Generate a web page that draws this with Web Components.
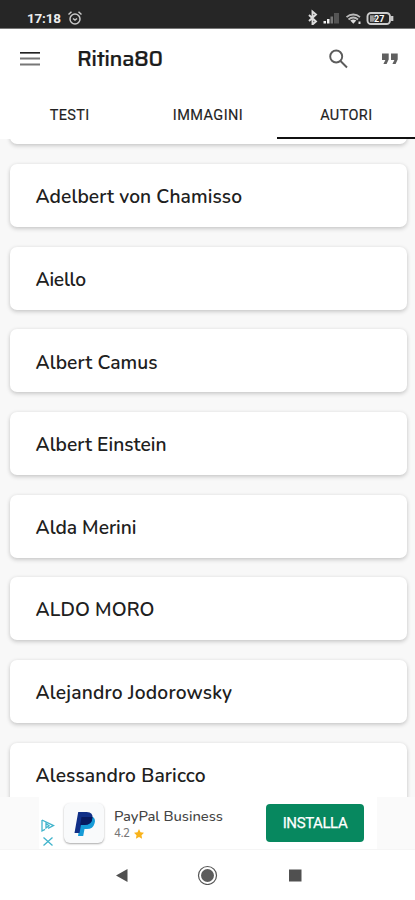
<!DOCTYPE html>
<html lang="it">
<head>
<meta charset="utf-8">
<meta name="viewport" content="width=device-width">
<title>Ritina80</title>
<style>
html,body{margin:0;height:100%;overflow:hidden;background:#fff}
body{font-family:Lato,"Open Sans",sans-serif;color:#161616}
</style>
</head>
<body>
<quotes-app></quotes-app>
<script>
const define = (name, html, ready) => customElements.define(name, class extends HTMLElement {
  constructor() {
    super();
    const t = document.createElement('template');
    t.innerHTML = html;
    this.attachShadow({mode: 'open'}).append(t.content.cloneNode(true));
  }
  connectedCallback() { if (ready) ready(this); }
});

// Text whose tracking is adjusted so that it occupies the given width.
define('fit-text', `<style>:host{display:inline-block;white-space:nowrap}span{display:inline-block}</style><span><slot></slot></span>`, el => {
  const s = el.shadowRoot.querySelector('span');
  const n = el.textContent.length;
  const w = s.getBoundingClientRect().width;
  s.style.letterSpacing = ((+el.getAttribute('width') - w) / (n - 1)) + 'px';
});

define('status-bar', `<style>
:host{display:flex;background:#262626;border-bottom:1px solid #777;box-sizing:border-box;height:29px;padding:9px 20px 0 27px;align-items:flex-start;color:#eee;font:700 13.500px/19px Roboto,sans-serif}
.sp{flex:1}svg{display:block;flex:none}
</style>
<fit-text width="34">17:18</fit-text>
<svg width="16" height="16" viewBox="0 0 16 16" fill="none" stroke="#c8c8c8" stroke-width="1.500" style="margin:1px 0 0 6px"><circle cx="8" cy="9" r="5"/><path d="M1.500 4.500 4.500 1.800M14.500 4.500l-3-2.700M6 8.500l2 1.600 2-1.600"/></svg>
<span class="sp"></span>
<svg width="87" height="16" viewBox="308 9 87 16" fill="none" stroke="#ddd" stroke-width="1.300">
<path d="m309 15 7 6.500-3.500 3V11.500l3.500 3-7 6.500" stroke-width="1.900"/>
<g stroke="none"><path fill="#eee" d="M323.500 21h2.500v2.500h-2.500zM327 19h2.500v4.500h-2.500z"/><path fill="#777" d="M330.500 16.500h2.500v7h-2.500z"/><path fill="#555" d="M334 13h5v10.500h-5z"/></g>
<path d="M346.500 17.200c4-3.600 9.500-3.600 13.500 0M348.500 19.500c3-2.500 6.500-2.500 9.500 0" stroke="#bbb" stroke-width="1.800"/><path d="m350.300 20.600 3 3.200 3-3.200q-3-2-6 0z" fill="#ddd" stroke="none"/><path d="M359.500 21.500v2.500" stroke-width="2"/>
<rect x="367.500" y="13" width="22.500" height="11" rx="3.500" stroke="#ccc" stroke-width="1.900"/><rect x="370" y="15.300" width="6" height="6.500" fill="#999" stroke="none"/><path d="M392.200 16v5" stroke="#ccc" stroke-width="2.300"/>
<text x="374" y="21.800" font-family="Roboto,sans-serif" font-size="9" font-weight="700" fill="#fff" stroke="#262626" stroke-width="1.200" paint-order="stroke">27</text>
</svg>`);

define('app-header', `<style>
:host{display:flex;height:61px;box-sizing:border-box;padding:0 15px 0 20px;align-items:center;background:#fff}
svg{display:block;flex:none}.title{margin:-1px 0 0 37px;flex:1;font:500 21.800px/28px Saira,"Exo 2",Rajdhani,Inter,sans-serif;color:#1c1c1c;-webkit-text-stroke:.2px #1c1c1c}
</style>
<svg width="20" height="15" viewBox="0 0 20 15"><path d="M0 .7h20" stroke="#222" stroke-width="1.900"/><path d="M0 6.500h20M0 12.500h20" stroke="#777" stroke-width="1.900"/></svg>
<span class="title"><fit-text width="86">Ritina80</fit-text></span>
<svg width="20" height="20" viewBox="0 0 20 20" fill="none" stroke="#5c5c5c" stroke-width="1.900" style="margin-top:-2px"><circle cx="8.200" cy="7.500" r="6"/><path d="m12.500 12 6.500 6.500"/></svg>
<svg width="16" height="12" viewBox="0 0 16 12" fill="#606060" style="margin:-1px 2.500px 0 33.500px"><path d="M0 .5h6.700v6L4.600 11H1.400l2-4H0zM9 .5h6.700v6L13.600 11h-3.200l2-4H9z"/></svg>`);

define('tab-bar', `<style>
:host{display:grid;grid-template-columns:1fr 1fr 1fr;height:49px;background:#fff}
div{display:flex;align-items:center;justify-content:center;box-sizing:border-box;padding:4px 0 0 1px;border-bottom:2px solid transparent;font:400 14.500px/20px Roboto,sans-serif;color:#222;-webkit-text-stroke:.15px #222}
.on{border-color:#111}
</style><div><fit-text width="39.500">TESTI</fit-text></div><div><fit-text width="70">IMMAGINI</fit-text></div><div class="on"><fit-text width="52">AUTORI</fit-text></div>`);

define('author-card', `<style>
:host{display:flex;align-items:center;flex:none;height:63px;box-sizing:border-box;padding:3.500px 26px 0;border-radius:7px;background:#fff;box-shadow:0 2px 4px rgba(0,0,0,.17),0 0 4px rgba(0,0,0,.06);font:600 19.200px/26px Nunito,Lato,sans-serif;color:#202020}
</style><slot></slot>`);

define('author-list', `<style>
:host{display:flex;flex-direction:column;justify-content:flex-end;gap:19.650px;height:658px;box-sizing:border-box;padding:0 8.500px 0 9.500px;background:#f8f8f8;overflow:hidden}
author-card:last-child{margin-bottom:-8.500px}
</style>
<author-card></author-card>
<author-card><fit-text width="206.500">Adelbert von Chamisso</fit-text></author-card>
<author-card><fit-text width="50.500">Aiello</fit-text></author-card>
<author-card><fit-text width="122">Albert Camus</fit-text></author-card>
<author-card><fit-text width="131">Albert Einstein</fit-text></author-card>
<author-card><fit-text width="101">Alda Merini</fit-text></author-card>
<author-card><fit-text width="119">ALDO MORO</fit-text></author-card>
<author-card><fit-text width="196.500">Alejandro Jodorowsky</fit-text></author-card>
<author-card><fit-text width="170">Alessandro Baricco</fit-text></author-card>`);

define('ad-banner', `<style>
:host{display:flex;height:53px;box-sizing:border-box;background:linear-gradient(90deg,#fafafa 39px,#fff 39px 377px,#fafafa 377px);padding-left:41px;border-bottom:1px solid #f5f5f5}
svg{display:block}.marks{width:14px;padding-top:22px}.logo{width:40px;height:40px;margin:6px 0 0 9px;border-radius:6px;background:#f9fafb;box-shadow:0 1px 2px #aaa}
.txt{width:152px;padding:9px 0 0 10px;box-sizing:border-box;color:#444;font:500 14.800px/20px Nunito,Roboto,sans-serif}
.rate{display:flex;align-items:center;gap:4px;font-size:11.500px;line-height:15px;color:#777}
.btn{width:98px;height:38px;margin:7px 0 0 10px;border-radius:4px;background:#07885f;color:#fff;display:flex;align-items:center;justify-content:center;font:400 15px/20px Roboto,sans-serif;-webkit-text-stroke:.25px #fff}
</style>
<div class="marks"><svg width="14" height="28" viewBox="0 0 14 28" fill="none" stroke="#40b4cc" stroke-width="1.300"><path d="M1 1v11l3-1.600M1 1l11.500 5.600L7 9.300M5 4.500v4.500l3-2.200zM2.500 18.500l9 8M11.500 18.500l-9 8"/></svg></div>
<div class="logo"><svg width="40" height="40" viewBox="0 0 40 40"><path fill="#169bd7" d="M17 14h12q3 2 1.500 6.500Q29 26 23 26h-2.500l-1.300 7H14z"/><path fill="#102f87" d="M14.200 9h8.500q6.800 0 5.600 6.500Q27 22 20.500 22h-3.500l-1.500 8H10.500z"/><path fill="#071a60" d="M17.500 14H28.400q.2 8-8 8H16.200z"/></svg></div>
<div class="txt"><fit-text width="109">PayPal Business</fit-text><div class="rate"><fit-text width="16">4.2</fit-text><svg width="10" height="10" viewBox="0 0 10 10"><path fill="#f9b31b" d="m5 0 1.500 3.200 3.500.5-2.500 2.500.6 3.600L5 8.100 1.900 9.800l.6-3.600L0 3.700l3.500-.5z"/></svg></div></div>
<div class="btn"><fit-text width="65">INSTALLA</fit-text></div>`);

define('nav-bar', `<style>
:host{display:flex;height:50px;background:#fff;padding:15px 0 0 115px;box-sizing:border-box}svg{display:block}
</style><svg width="187" height="20" viewBox="0 0 187 20"><path fill="#505050" d="M1 10.500 12.500 4v13zM174 4.500h12.500v12h-12.500z"/><circle cx="92.500" cy="10.500" r="9" fill="none" stroke="#555" stroke-width="1.200"/><circle cx="92.500" cy="10.500" r="6.500" fill="#5c5c5c"/></svg>`);

define('quotes-app', `<style>:host{display:flex;flex-direction:column;width:415px;height:900px;overflow:hidden}:host>*{flex:none}</style>
<status-bar></status-bar><app-header></app-header><tab-bar></tab-bar><author-list></author-list><ad-banner></ad-banner><nav-bar></nav-bar>`);
</script>
</body>
</html>
